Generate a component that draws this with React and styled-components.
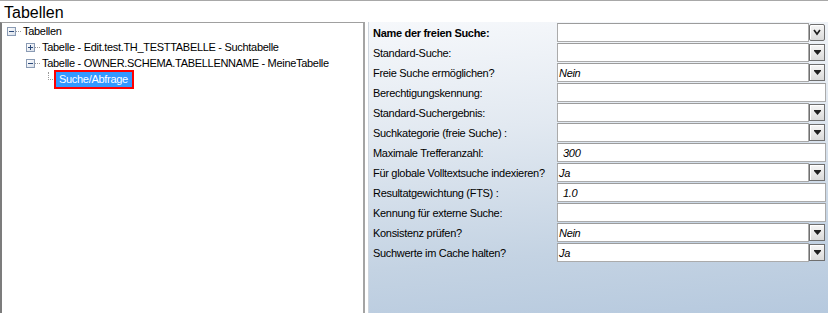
import * as React from 'react';
import styled, { createGlobalStyle } from 'styled-components';

const GlobalStyle = createGlobalStyle`
  html, body {
    margin: 0;
    padding: 0;
    background: #ffffff;
  }
  body {
    font-family: "Liberation Sans", Arial, sans-serif;
    font-size: 11px;
    letter-spacing: -0.3px;
    color: #000000;
  }
`;

const Page = styled.div`
  width: 828px;
  height: 313px;
  box-sizing: border-box;
  border-top: 1px solid #a8a8a8;
  display: flex;
  flex-direction: column;
  overflow: hidden;
`;

const Title = styled.div`
  height: 21px;
  box-sizing: border-box;
  padding: 3px 0 0 4px;
  font-size: 16px;
  letter-spacing: 0;
  line-height: 18px;
`;

const Body = styled.div`
  flex: 1;
  display: flex;
  gap: 3px;
  min-height: 0;
`;

const TreePanel = styled.div`
  width: 365px;
  box-sizing: border-box;
  border-top: 1px solid #a0a0a0;
  border-left: 2px solid #7c7c7c;
  border-right: 2px solid #a4a4a4;
  padding: 0 0 0 4px;
  background: #ffffff;
`;

const TreeRow = styled.div`
  height: 16px;
  display: flex;
  align-items: center;
  padding-left: ${props => props.indent}px;
  white-space: nowrap;
`;

const Expander = styled.span`
  width: 9px;
  height: 9px;
  box-sizing: border-box;
  border: 1px solid #8a9bb4;
  background: linear-gradient(135deg, #ffffff, #d8dfea);
  display: flex;
  align-items: center;
  justify-content: center;
  flex: none;
`;

const Connector = styled.span`
  width: ${props => props.size}px;
  border-top: 1px dotted #9a9a9a;
  margin: 0 2px 0 0;
  flex: none;
`;

const Elbow = styled.span`
  width: 6px;
  height: 7px;
  align-self: flex-start;
  margin-top: 1px;
  border-left: 1px dotted #9a9a9a;
  border-bottom: 1px dotted #9a9a9a;
  flex: none;
`;

const Selected = styled.span`
  background: #3399ff;
  color: #ffffff;
  padding: 0 4px 0 3px;
  line-height: 15px;
  outline: 2px solid #ff0000;
  margin-left: 1px;
`;

const FormPanel = styled.div`
  flex: 1;
  border-left: 1px solid #cfd6de;
  background: linear-gradient(175deg, #f6f8fb 0%, #e2e9f1 35%, #c4d3e3 75%, #b6c9de 100%);
  padding: 1px 2px 0 4px;
`;

const Grid = styled.div`
  display: grid;
  grid-template-columns: 184px 1fr;
  grid-auto-rows: 20px;
`;

const Label = styled.div`
  display: flex;
  align-items: center;
  font-weight: ${props => (props.bold ? 'bold' : 'normal')};
  white-space: nowrap;
`;

const Field = styled.div`
  display: flex;
  align-items: flex-start;
`;

const Box = styled.div`
  flex: 1;
  height: 19px;
  box-sizing: border-box;
  border: 1px solid #ababab;
  border-top-color: #9c9c9c;
  background: #ffffff;
  font-style: italic;
  display: flex;
  align-items: center;
  padding-left: ${props => (props.text ? 5 : 1)}px;
`;

const DropButton = styled.div`
  width: 16px;
  height: 17px;
  margin: 1px 1px 0 0;
  box-sizing: border-box;
  border: 1px solid #6f6f6f;
  border-radius: ${props => (props.round ? 2 : 0)}px;
  box-shadow: inset 1px 1px 0 #ffffff;
  background: linear-gradient(to bottom, #f6f6f6, #dadada);
  display: flex;
  align-items: center;
  justify-content: center;
  flex: none;
`;

const Minus = () => (
  <svg width="7" height="7" viewBox="0 0 7 7">
    <rect x="1" y="3" width="5" height="1" fill="#2b4a7a" />
  </svg>
);

const Plus = () => (
  <svg width="7" height="7" viewBox="0 0 7 7">
    <rect x="1" y="3" width="5" height="1" fill="#2b4a7a" />
    <rect x="3" y="1" width="1" height="5" fill="#2b4a7a" />
  </svg>
);

const Arrow = ({ chevron }) => (chevron
  ? (
    <svg width="8" height="7" viewBox="0 0 8 7">
      <path d="M1 1 L4 5 L7 1" stroke="#202020" strokeWidth="1.7" fill="none" />
    </svg>
  )
  : (
    <svg width="7" height="5" viewBox="0 0 7 5">
      <rect x="0" y="0" width="7" height="1" fill="#202020" />
      <polygon points="0,1 7,1 3.5,5" fill="#202020" />
    </svg>
  ));

const fields = [
  { label: 'Name der freien Suche:', bold: true, combo: true, chevron: true },
  { label: 'Standard-Suche:', combo: true },
  { label: 'Freie Suche ermöglichen?', combo: true, value: 'Nein' },
  { label: 'Berechtigungskennung:' },
  { label: 'Standard-Suchergebnis:', combo: true },
  { label: 'Suchkategorie (freie Suche) :', combo: true },
  { label: 'Maximale Trefferanzahl:', value: '300' },
  { label: 'Für globale Volltextsuche indexieren?', combo: true, value: 'Ja' },
  { label: 'Resultatgewichtung (FTS) :', value: '1.0' },
  { label: 'Kennung für externe Suche:' },
  { label: 'Konsistenz prüfen?', combo: true, value: 'Nein' },
  { label: 'Suchwerte im Cache halten?', combo: true, value: 'Ja' },
];

const App = () => {
  return (
    <Page>
      <GlobalStyle />
      <Title>Tabellen</Title>
      <Body>
        <TreePanel>
          <TreeRow indent={1}>
            <Expander><Minus /></Expander>
            <Connector size={5} />
            Tabellen
          </TreeRow>
          <TreeRow indent={20}>
            <Expander><Plus /></Expander>
            <Connector size={5} />
            Tabelle - Edit.test.TH_TESTTABELLE - Suchtabelle
          </TreeRow>
          <TreeRow indent={20}>
            <Expander><Minus /></Expander>
            <Connector size={5} />
            Tabelle - OWNER.SCHEMA.TABELLENNAME - MeineTabelle
          </TreeRow>
          <TreeRow indent={42}>
            <Elbow />
            <Selected>Suche/Abfrage</Selected>
          </TreeRow>
        </TreePanel>
        <FormPanel>
          <Grid>
            {fields.map((f, idx) => (
              <React.Fragment key={idx}>
                <Label bold={f.bold}>{f.label}</Label>
                <Field>
                  <Box text={!f.combo}>{f.value}</Box>
                  {f.combo && (
                    <DropButton round={f.chevron}>
                      <Arrow chevron={f.chevron} />
                    </DropButton>
                  )}
                </Field>
              </React.Fragment>
            ))}
          </Grid>
        </FormPanel>
      </Body>
    </Page>
  );
};

export default App;
